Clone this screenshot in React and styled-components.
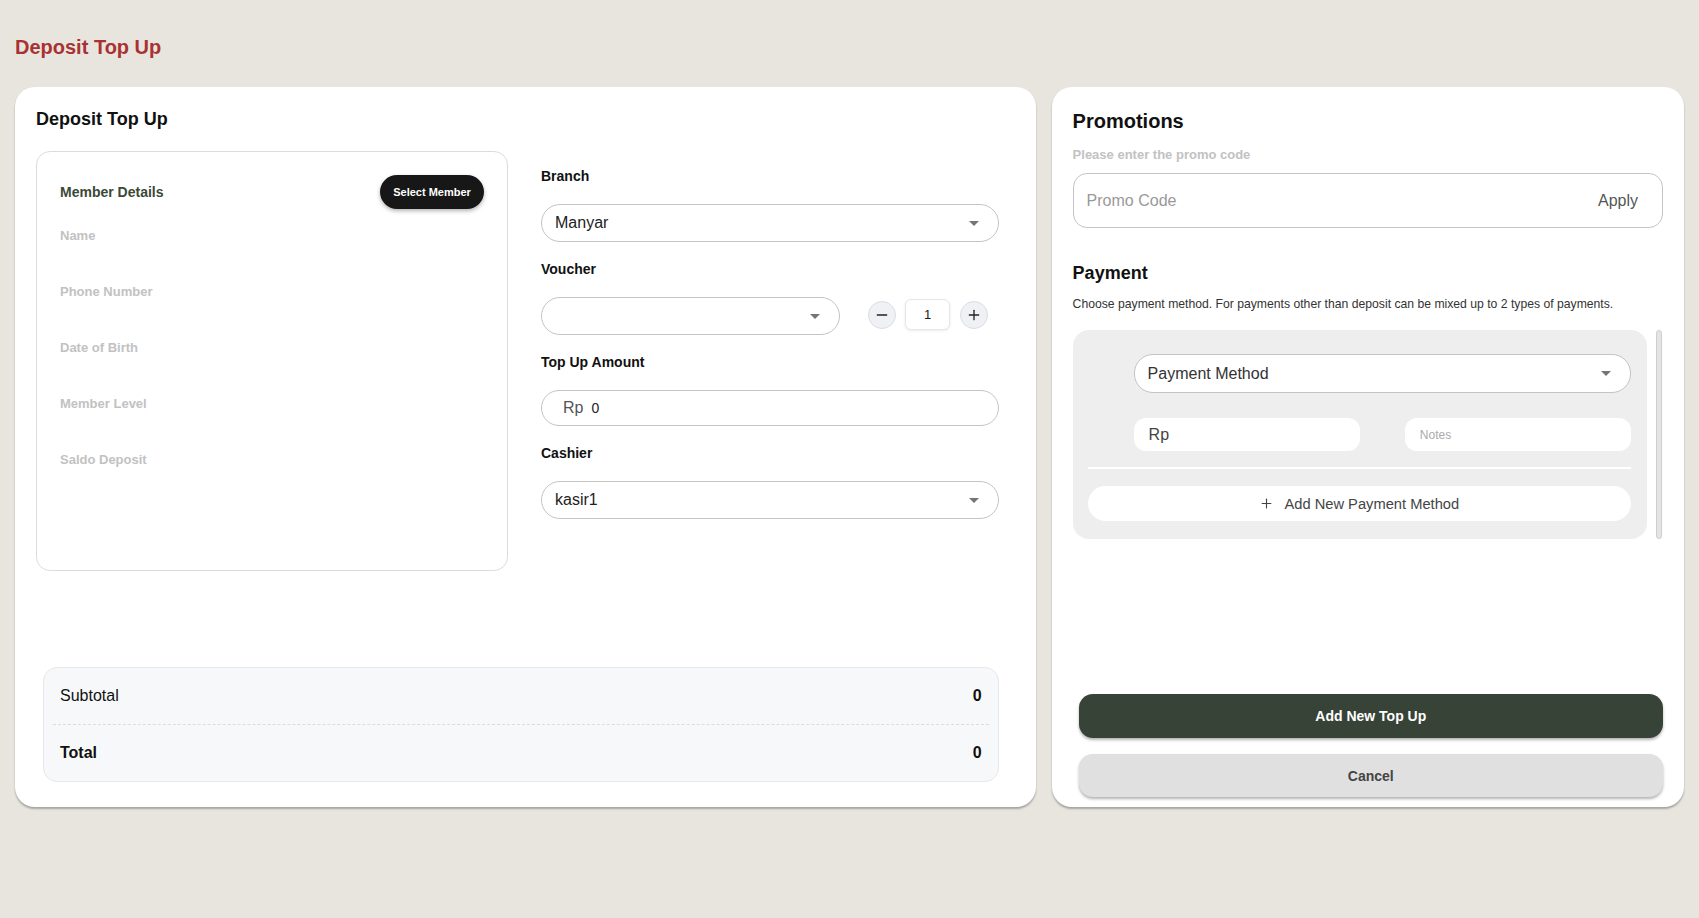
import React from 'react';
import styled, { createGlobalStyle } from 'styled-components';
import { Minus, Plus } from 'lucide-react';

const GlobalStyle = createGlobalStyle`
  * { box-sizing: border-box; }
  body {
    margin: 0;
    background: #e8e5df;
    font-family: "Liberation Sans", Arial, sans-serif;
    color: #1a1a1a;
  }
`;

const Page = styled.div`
  padding: 35px 15px 0 15px;
  min-height: 918px;
`;

const PageTitle = styled.h1`
  margin: 0 0 28px;
  font-size: 20px;
  line-height: 24px;
  font-weight: 700;
  color: #a83232;
`;

const Columns = styled.div`
  display: grid;
  grid-template-columns: minmax(0, 1020fr) minmax(0, 632fr);
  gap: 16px;
`;

const Card = styled.section`
  height: 720px;
  background: #fff;
  border-radius: 20px;
  box-shadow: 0 2px 2px rgba(0, 0, 0, 0.28);
  display: flex;
  flex-direction: column;
`;

const LeftCard = styled(Card)`
  padding: 21px 37px 25px 21px;
`;

const RightCard = styled(Card)`
  padding: 22px 21px 10px 21px;
`;

const CardTitle = styled.h2`
  margin: 0;
  font-size: ${(p) => p.size || 18}px;
  line-height: ${(p) => (p.size || 18) + 4}px;
  font-weight: 700;
  color: #111;
`;

const TopGrid = styled.div`
  margin-top: 21px;
  display: grid;
  grid-template-columns: 472px minmax(0, 1fr);
  gap: 33px;
  align-items: start;
`;

const MemberBox = styled.div`
  height: 420px;
  border: 1px solid #dcdcdc;
  border-radius: 14px;
  padding: 23px 23px 0 23px;
`;

const MemberHeader = styled.div`
  display: flex;
  justify-content: space-between;
  align-items: center;
`;

const MemberHeading = styled.span`
  font-size: 14px;
  font-weight: 700;
  color: #3b4a37;
`;

const DarkPill = styled.button`
  height: 34px;
  width: 104px;
  border: none;
  border-radius: 17px;
  background: #171717;
  color: #fff;
  font-family: inherit;
  font-size: 11px;
  font-weight: 700;
  box-shadow: 0 2px 4px rgba(0, 0, 0, 0.3);
`;

const MemberFields = styled.div`
  margin-top: 19px;
  display: flex;
  flex-direction: column;
  gap: 40px;
`;

const MutedLabel = styled.span`
  font-size: 13px;
  line-height: 16px;
  font-weight: 700;
  color: #c2c2c2;
`;

const Form = styled.div`
  padding-top: 17px;
  display: flex;
  flex-direction: column;
  gap: 19px;
`;

const Field = styled.div`
  display: flex;
  flex-direction: column;
  gap: 20px;
`;

const FieldLabel = styled.label`
  font-size: 14px;
  line-height: 16px;
  font-weight: 700;
  color: #111;
`;

const SelectBox = styled.div`
  height: ${(p) => p.h || 38}px;
  border: 1px solid #c4c4c4;
  border-radius: 19px;
  background: #fff;
  display: flex;
  align-items: center;
  justify-content: space-between;
  padding: 0 19px 0 13px;
  font-size: 16px;
  color: #222;
`;

const Caret = styled.span`
  width: 0;
  height: 0;
  border-left: 5px solid transparent;
  border-right: 5px solid transparent;
  border-top: 5px solid #757575;
`;

const VoucherRow = styled.div`
  display: flex;
  align-items: center;
`;

const VoucherSelect = styled(SelectBox)`
  flex: 0 0 299px;
`;

const Stepper = styled.div`
  display: flex;
  align-items: center;
  gap: 9px;
  margin-left: 28px;
  margin-bottom: 3px;
`;

const RoundButton = styled.button`
  width: 28px;
  height: 28px;
  border-radius: 50%;
  border: 1px solid #d9dde4;
  background: #eff1f5;
  display: flex;
  align-items: center;
  justify-content: center;
  padding: 0;
  color: #222;
`;

const QtyBox = styled.div`
  width: 45px;
  height: 31px;
  border: 1px solid #e3e6eb;
  border-radius: 6px;
  background: #fff;
  box-shadow: 0 1px 3px rgba(0, 0, 0, 0.08);
  display: flex;
  align-items: center;
  justify-content: center;
  font-size: 13px;
  margin-right: 1px;
`;

const AmountInput = styled.div`
  height: 36px;
  border: 1px solid #c4c4c4;
  border-radius: 18px;
  display: flex;
  align-items: center;
  gap: 8px;
  padding-left: 21px;
`;

const Prefix = styled.span`
  font-size: 16px;
  color: #555;
`;

const AmountValue = styled.span`
  font-size: 14px;
  color: #222;
`;

const Summary = styled.div`
  margin-top: auto;
  margin-left: 7px;
  border: 1px solid #e6e8eb;
  border-radius: 14px;
  background: #f7f8fa;
`;

const SummaryRow = styled.div`
  height: 56px;
  display: flex;
  justify-content: space-between;
  align-items: center;
  padding: 0 16px 0 16px;
  font-size: 16px;
  font-weight: ${(p) => (p.bold ? 700 : 400)};
  color: #111;
`;

const Amount = styled.span`
  font-weight: 700;
`;

const DashedLine = styled.div`
  margin: 0 9px;
  border-top: 1px dashed #dcdcdc;
`;

const SubNote = styled(MutedLabel)`
  margin-top: 14px;
`;

const PromoInput = styled.div`
  margin-top: 10px;
  height: 55px;
  border: 1px solid #c4c4c4;
  border-radius: 14px;
  display: flex;
  align-items: center;
  justify-content: space-between;
  padding: 0 24px 0 13px;
  font-size: 16px;
`;

const Placeholder = styled.span`
  color: ${(p) => p.color || '#999'};
  font-size: ${(p) => p.size || 16}px;
`;

const PaymentTitle = styled(CardTitle)`
  margin-top: 34px;
`;

const Description = styled.p`
  margin: 12px 0 0;
  font-size: 12.2px;
  line-height: 16px;
  color: #333;
`;

const PaymentArea = styled.div`
  margin-top: 18px;
  display: flex;
  gap: 9px;
  margin-right: 1px;
`;

const PaymentBox = styled.div`
  flex: 1;
  height: 209px;
  background: #eeeeee;
  border-radius: 16px;
  padding: 24px 16px 17px 15px;
  display: flex;
  flex-direction: column;
`;

const Scrollbar = styled.div`
  width: 6px;
  height: 209px;
  border-radius: 3px;
  background: #e4e4e4;
  border: 1px solid #cfcfcf;
`;

const MethodEntry = styled.div`
  margin-left: 46px;
  display: flex;
  flex-direction: column;
  gap: 25px;
`;

const MethodSelect = styled(SelectBox)`
  height: 39px;
  color: #333;
`;

const InputPair = styled.div`
  display: grid;
  grid-template-columns: 1fr 1fr;
  gap: 45px;
`;

const WhiteInput = styled.div`
  height: 33px;
  border-radius: 12px;
  background: #fff;
  display: flex;
  align-items: center;
  padding-left: 15px;
`;

const WhiteDivider = styled.div`
  margin-top: 16px;
  height: 2px;
  background: #fff;
`;

const AddMethodButton = styled.button`
  margin-top: 17px;
  height: 35px;
  border: none;
  border-radius: 18px;
  background: #fff;
  display: flex;
  align-items: center;
  justify-content: center;
  gap: 10px;
  font-family: inherit;
  font-size: 14.7px;
  color: #444;
`;

const Actions = styled.div`
  margin-top: auto;
  margin-left: 6px;
  display: flex;
  flex-direction: column;
  gap: 16px;
`;

const ActionButton = styled.button`
  height: ${(p) => (p.primary ? 44 : 43)}px;
  border: none;
  border-radius: 14px;
  background: ${(p) => (p.primary ? '#374336' : '#e0e0e0')};
  color: ${(p) => (p.primary ? '#fff' : '#444')};
  font-family: inherit;
  font-size: 14px;
  font-weight: 700;
  box-shadow: 0 2px 3px rgba(0, 0, 0, 0.3);
`;

const memberFields = ['Name', 'Phone Number', 'Date of Birth', 'Member Level', 'Saldo Deposit'];

const App = () => {
  return (
    <>
      <GlobalStyle />
      <Page>
        <PageTitle>Deposit Top Up</PageTitle>
        <Columns>
          <LeftCard>
            <CardTitle>Deposit Top Up</CardTitle>
            <TopGrid>
              <MemberBox>
                <MemberHeader>
                  <MemberHeading>Member Details</MemberHeading>
                  <DarkPill>Select Member</DarkPill>
                </MemberHeader>
                <MemberFields>
                  {memberFields.map((name) => (
                    <MutedLabel key={name}>{name}</MutedLabel>
                  ))}
                </MemberFields>
              </MemberBox>
              <Form>
                <Field>
                  <FieldLabel>Branch</FieldLabel>
                  <SelectBox>
                    Manyar
                    <Caret />
                  </SelectBox>
                </Field>
                <Field>
                  <FieldLabel>Voucher</FieldLabel>
                  <VoucherRow>
                    <VoucherSelect>
                      <span />
                      <Caret />
                    </VoucherSelect>
                    <Stepper>
                      <RoundButton>
                        <Minus size={16} strokeWidth={2} />
                      </RoundButton>
                      <QtyBox>1</QtyBox>
                      <RoundButton>
                        <Plus size={16} strokeWidth={2} />
                      </RoundButton>
                    </Stepper>
                  </VoucherRow>
                </Field>
                <Field>
                  <FieldLabel>Top Up Amount</FieldLabel>
                  <AmountInput>
                    <Prefix>Rp</Prefix>
                    <AmountValue>0</AmountValue>
                  </AmountInput>
                </Field>
                <Field>
                  <FieldLabel>Cashier</FieldLabel>
                  <SelectBox>
                    kasir1
                    <Caret />
                  </SelectBox>
                </Field>
              </Form>
            </TopGrid>
            <Summary>
              <SummaryRow>
                Subtotal
                <Amount>0</Amount>
              </SummaryRow>
              <DashedLine />
              <SummaryRow bold>
                Total
                <Amount>0</Amount>
              </SummaryRow>
            </Summary>
          </LeftCard>

          <RightCard>
            <CardTitle size={20}>Promotions</CardTitle>
            <SubNote>Please enter the promo code</SubNote>
            <PromoInput>
              <Placeholder>Promo Code</Placeholder>
              <Placeholder color="#555">Apply</Placeholder>
            </PromoInput>
            <PaymentTitle>Payment</PaymentTitle>
            <Description>
              Choose payment method. For payments other than deposit can be mixed up to 2 types of payments.
            </Description>
            <PaymentArea>
              <PaymentBox>
                <MethodEntry>
                  <MethodSelect>
                    Payment Method
                    <Caret />
                  </MethodSelect>
                  <InputPair>
                    <WhiteInput>
                      <Placeholder color="#444">Rp</Placeholder>
                    </WhiteInput>
                    <WhiteInput>
                      <Placeholder color="#aaa" size={12}>Notes</Placeholder>
                    </WhiteInput>
                  </InputPair>
                </MethodEntry>
                <WhiteDivider />
                <AddMethodButton>
                  <Plus size={15} strokeWidth={1.8} />
                  Add New Payment Method
                </AddMethodButton>
              </PaymentBox>
              <Scrollbar />
            </PaymentArea>
            <Actions>
              <ActionButton primary>Add New Top Up</ActionButton>
              <ActionButton>Cancel</ActionButton>
            </Actions>
          </RightCard>
        </Columns>
      </Page>
    </>
  );
};

export default App;
